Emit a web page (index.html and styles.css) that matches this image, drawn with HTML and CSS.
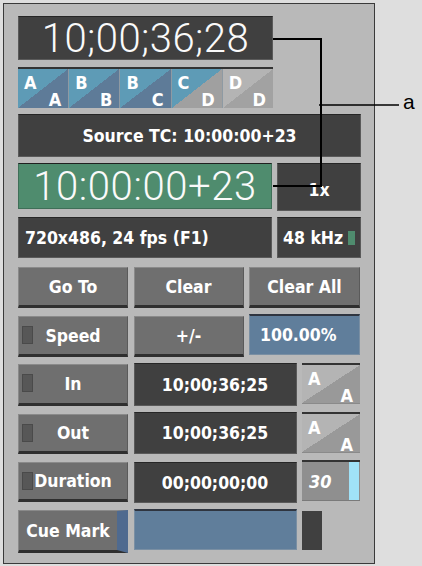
FILE: index.html
```html
<!DOCTYPE html>
<html lang="en">
<head>
  <meta charset="UTF-8">
  <meta name="viewport" content="width=device-width, initial-scale=1.0">
  <title>Timecode Panel</title>
  <link rel="stylesheet" href="styles.css">
</head>
<body>
  <div class="page">
    <div class="panel">
      <div class="row r1">
        <div class="field tc-main">10;00;36;28</div>
      </div>

      <div class="row r2 tracks">
        <div class="track t-blue"><span>A</span><span>A</span></div>
        <div class="track t-blue"><span>B</span><span>B</span></div>
        <div class="track t-blue"><span>B</span><span>C</span></div>
        <div class="track t-mix"><span>C</span><span>D</span></div>
        <div class="track t-gray"><span>D</span><span>D</span></div>
      </div>

      <div class="row r3">
        <div class="field source">Source TC: 10:00:00+23</div>
      </div>

      <div class="row r4">
        <div class="field tc-main tc-green">10:00:00+23</div>
        <div class="field side rate">1x</div>
      </div>

      <div class="row r5">
        <div class="field format">720x486, 24 fps (F1)</div>
        <div class="field side audio">48 kHz<span class="led"></span></div>
      </div>

      <div class="row r6 grid-btn">
        <button class="btn">Go To</button>
        <button class="btn">Clear</button>
        <button class="btn">Clear All</button>
      </div>

      <div class="row r7 grid-btn">
        <button class="btn"><span class="ind"></span>Speed</button>
        <button class="btn">+/-</button>
        <div class="field value">100.00%</div>
      </div>

      <div class="row r8 grid-tc">
        <button class="btn"><span class="ind"></span>In</button>
        <div class="field tcv">10;00;36;25</div>
        <div class="track small"><span>A</span><span>A</span></div>
      </div>

      <div class="row r9 grid-tc">
        <button class="btn"><span class="ind"></span>Out</button>
        <div class="field tcv">10;00;36;25</div>
        <div class="track small"><span>A</span><span>A</span></div>
      </div>

      <div class="row r10 grid-tc">
        <button class="btn"><span class="ind"></span>Duration</button>
        <div class="field tcv">00;00;00;00</div>
        <div class="fps"><span class="fps-num">30</span><span class="fps-bar"></span></div>
      </div>

      <div class="row r11 grid-tc">
        <button class="btn cue">Cue Mark</button>
        <div class="field value cue-field"></div>
        <div class="field stub"></div>
      </div>
    </div>

    <!-- callout lines -->
    <svg class="callout" width="422" height="566" viewBox="0 0 422 566">
      <polyline points="273,39 321,39 321,186 273,186" fill="none" stroke="#000" stroke-width="2"/>
      <line x1="319" y1="105" x2="399" y2="105" stroke="#000" stroke-width="1.5"/>
      <text x="403" y="109" class="callout-label">a</text>
    </svg>
  </div>
</body>
</html>
```

FILE: styles.css
```css
* {
  box-sizing: border-box;
  margin: 0;
  padding: 0;
}

body {
  background: #dedede;
  font-family: "DejaVu Sans Condensed", "DejaVu Sans", sans-serif;
  font-stretch: condensed;
  font-weight: bold;
  font-size: 17.5px;
  color: #fff;
}

.page {
  position: relative;
  width: 422px;
  height: 566px;
}

.panel {
  position: relative;
  top: 3px;
  left: 3px;
  width: 372px;
  height: 561px;
  background: #b9b9b9;
  border: 1px solid #3a3a3a;
  padding: 12px 13px 0 14px;
}

.row {
  display: flex;
  gap: 5px;
  margin-top: 6px;
}

/* dark read-outs */
.field {
  background: #404040;
  border: 1px solid #5a5a5a;
  border-top-color: #262626;
  display: flex;
  align-items: center;
  justify-content: center;
  white-space: nowrap;
}

.tc-main {
  font-family: Roboto, "Liberation Sans", sans-serif;
  font-stretch: normal;
  font-weight: 300;
  font-size: 40px;
  letter-spacing: 0.6px;
  color: #fafafa;
}

.r1 {
  margin-top: 0;
  height: 44px;
}

.r1 .field {
  width: 255px;
}

/* track selector strip */
.tracks {
  margin-top: 7px;
  height: 41px;
  width: 255px;
  gap: 0;
  border-top: 2px solid #333;
}

.track {
  flex: 1;
  display: flex;
  flex-direction: column;
  justify-content: space-between;
  padding: 5px 7px 0 6px;
  border-right: 1px solid #8e9aa3;
  font-size: 18px;
  line-height: 17px;
}

.track:last-child {
  border-right: none;
}

.track span:last-child {
  align-self: flex-end;
}

.t-blue {
  background: linear-gradient(to bottom right, #5e9bb6 50%, #5e7b98 50%);
}

.t-mix {
  background: linear-gradient(to bottom right, #5e9bb6 50%, #a0a0a0 50%);
}

.t-gray {
  background: linear-gradient(to bottom right, #b4b4b4 50%, #a2a2a2 50%);
}

.track.small {
  flex: none;
  align-self: flex-start;
  height: 41px;
  border-top: 2px solid #333;
  border-right: none;
  border-bottom: 1px solid #8a8a8a;
  background: linear-gradient(to bottom right, #b4b4b4 50%, #999 50%);
}

.r3 {
  height: 43px;
}

.source {
  width: 100%;
}

.r4 {
  height: 48px;
}

.tc-green {
  width: 254px;
  height: 46px;
  background: #4f8c6e;
  border-color: #3f6f58;
  border-top-color: #1f1f1f;
}

.side {
  flex: 1;
}

.rate {
  padding-top: 6px;
}

.r5 {
  height: 41px;
}

.format {
  width: 254px;
  justify-content: flex-start;
  padding-left: 6px;
}

.audio {
  justify-content: flex-start;
  padding-left: 5px;
}

.led {
  display: inline-block;
  width: 7px;
  height: 14px;
  margin-left: 5px;
  background: #4f8c6e;
}

/* button grids */
.grid-btn {
  display: grid;
  grid-template-columns: 110px 110px 111px;
  column-gap: 5.5px;
}

.grid-tc {
  display: grid;
  grid-template-columns: 110px 163px 58px;
  column-gap: 5.5px;
}

.btn {
  position: relative;
  height: 41px;
  font: inherit;
  color: #fff;
  background: #6f6f6f;
  border: 1px solid #8a8a8a;
  border-right-color: #5a5a5a;
  border-bottom: 3px solid #2f2f2f;
  cursor: pointer;
}

.ind {
  position: absolute;
  left: 3px;
  top: 9px;
  width: 11px;
  height: 18px;
  background: #575757;
  border: 1px solid #4a4a4a;
}

.r6 {
  margin-top: 9px;
  height: 41px;
}

.r7 {
  height: 43px;
}

.r7 .btn {
  align-self: end;
}

.value {
  align-self: start;
  height: 41px;
  background: #607e9b;
  border-color: #7a8fa3;
  border-top: 2px solid #2f3540;
  justify-content: flex-start;
  padding-left: 10px;
}

.r8 {
  height: 43px;
}

.r8 .btn {
  align-self: end;
  height: 42px;
}

.r9 {
  height: 42px;
}

.r9 .btn {
  align-self: end;
  height: 40px;
}

.r10 {
  height: 43px;
}

.r10 .btn {
  height: 40px;
  margin-top: 2px;
}

.r10 .tcv {
  margin-top: 2px;
}

.fps {
  display: flex;
  height: 41px;
  background: #8f8f8f;
  border-top: 2px solid #333;
  border-bottom: 1px solid #7a7a7a;
}

.fps-num {
  flex: 1;
  align-self: center;
  padding-left: 7px;
  font-style: italic;
  font-size: 18px;
}

.fps-bar {
  width: 10px;
  margin: 0 1px 0 0;
  background: #a0e2f8;
}

.r11 {
  height: 44px;
}

.cue {
  align-self: end;
  height: 43px;
  border-right: 11px solid #4f6a8f;
  padding-right: 0;
}

.cue-field {
  padding: 0;
}

.stub {
  align-self: center;
  width: 20px;
  height: 39px;
  margin-top: -1px;
  border: none;
  background: #404040;
}

/* callout */
.callout {
  position: absolute;
  top: 0;
  left: 0;
  pointer-events: none;
}

.callout-label {
  font-family: "Liberation Sans", Arial, sans-serif;
  font-size: 21px;
  font-weight: normal;
  fill: #000;
}
```
